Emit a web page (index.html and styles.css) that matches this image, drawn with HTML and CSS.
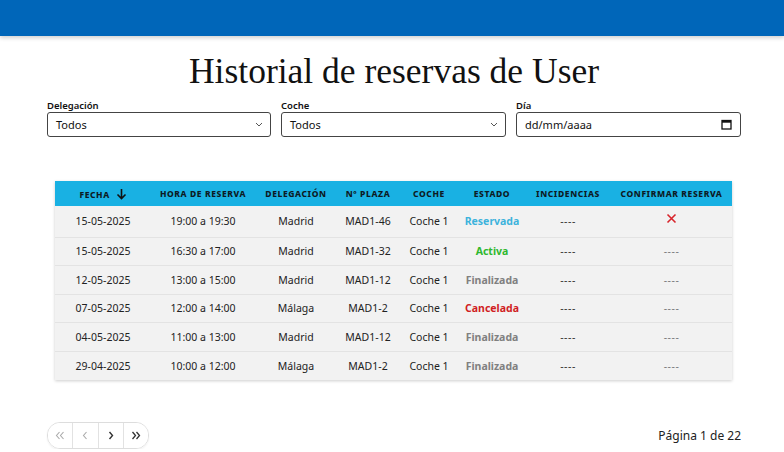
FILE: index.html
```html
<!DOCTYPE html>
<html lang="es">
<head>
<meta charset="utf-8">
<title>Historial de reservas</title>
<link rel="stylesheet" href="styles.css">
</head>
<body>
<header class="topbar"></header>
<main class="container">
  <h1 class="title">Historial de reservas de User</h1>
  <div class="filters">
    <div class="field">
      <label class="label">Delegación</label>
      <div class="control"><span>Todos</span>
        <svg class="chev" width="8" height="5" viewBox="0 0 8 5"><path d="M1 1l3 3 3-3" fill="none" stroke="#555" stroke-width="1"/></svg>
      </div>
    </div>
    <div class="field">
      <label class="label">Coche</label>
      <div class="control"><span>Todos</span>
        <svg class="chev" width="8" height="5" viewBox="0 0 8 5"><path d="M1 1l3 3 3-3" fill="none" stroke="#555" stroke-width="1"/></svg>
      </div>
    </div>
    <div class="field">
      <label class="label">Día</label>
      <div class="control"><span>dd/mm/aaaa</span>
        <svg class="cal" width="11" height="11" viewBox="0 0 11 11"><rect x="1" y="1.5" width="9" height="8.5" fill="none" stroke="#111" stroke-width="1.3"/><rect x="1" y="1.5" width="9" height="2.2" fill="#111"/></svg>
      </div>
    </div>
  </div>

  <div class="table-wrap">
    <table class="grid">
      <colgroup>
        <col class="c1"><col class="c2"><col class="c3"><col class="c4"><col class="c5"><col class="c6"><col class="c7"><col class="c8">
      </colgroup>
      <thead>
        <tr>
          <th>FECHA <svg class="arrow" width="11" height="12" viewBox="0 0 11 12"><path d="M5.5 1v9.5M1.5 6.5l4 4 4-4" fill="none" stroke="#111" stroke-width="1.6"/></svg></th>
          <th>HORA DE RESERVA</th>
          <th>DELEGACIÓN</th>
          <th>Nº PLAZA</th>
          <th>COCHE</th>
          <th>ESTADO</th>
          <th>INCIDENCIAS</th>
          <th>CONFIRMAR RESERVA</th>
        </tr>
      </thead>
      <tbody>
        <tr class="first">
          <td>15-05-2025</td><td>19:00 a 19:30</td><td>Madrid</td><td>MAD1-46</td><td>Coche 1</td>
          <td class="st reservada">Reservada</td><td class="dash">----</td>
          <td><svg class="x" width="11" height="11" viewBox="0 0 11 11"><path d="M1.5 1.5l8 8M9.5 1.5l-8 8" stroke="#d8242b" stroke-width="1.6"/></svg></td>
        </tr>
        <tr>
          <td>15-05-2025</td><td>16:30 a 17:00</td><td>Madrid</td><td>MAD1-32</td><td>Coche 1</td>
          <td class="st activa">Activa</td><td class="dash">----</td><td class="dash light">----</td>
        </tr>
        <tr>
          <td>12-05-2025</td><td>13:00 a 15:00</td><td>Madrid</td><td>MAD1-12</td><td>Coche 1</td>
          <td class="st finalizada">Finalizada</td><td class="dash">----</td><td class="dash light">----</td>
        </tr>
        <tr>
          <td>07-05-2025</td><td>12:00 a 14:00</td><td>Málaga</td><td>MAD1-2</td><td>Coche 1</td>
          <td class="st cancelada">Cancelada</td><td class="dash">----</td><td class="dash light">----</td>
        </tr>
        <tr>
          <td>04-05-2025</td><td>11:00 a 13:00</td><td>Madrid</td><td>MAD1-12</td><td>Coche 1</td>
          <td class="st finalizada">Finalizada</td><td class="dash">----</td><td class="dash light">----</td>
        </tr>
        <tr>
          <td>29-04-2025</td><td>10:00 a 12:00</td><td>Málaga</td><td>MAD1-2</td><td>Coche 1</td>
          <td class="st finalizada">Finalizada</td><td class="dash">----</td><td class="dash light">----</td>
        </tr>
      </tbody>
    </table>
  </div>

  <div class="footer">
    <div class="pager">
      <button class="pbtn off"><svg width="10" height="9" viewBox="0 0 10 9"><path d="M4.5 1L1.5 4.5 4.5 8M8.5 1L5.5 4.5 8.5 8" fill="none" stroke="#aaa" stroke-width="1.1"/></svg></button>
      <button class="pbtn off"><svg width="6" height="9" viewBox="0 0 6 9"><path d="M4.5 1L1.5 4.5 4.5 8" fill="none" stroke="#aaa" stroke-width="1.1"/></svg></button>
      <button class="pbtn"><svg width="6" height="9" viewBox="0 0 6 9"><path d="M1.5 1L4.5 4.5 1.5 8" fill="none" stroke="#333" stroke-width="1.4"/></svg></button>
      <button class="pbtn"><svg width="10" height="9" viewBox="0 0 10 9"><path d="M1.5 1L4.5 4.5 1.5 8M5.5 1L8.5 4.5 5.5 8" fill="none" stroke="#333" stroke-width="1.3"/></svg></button>
    </div>
    <div class="pageinfo">Página 1 de 22</div>
  </div>
</main>
</body>
</html>
```

FILE: styles.css
```css
* { box-sizing: border-box; }
html, body { margin: 0; padding: 0; background: #fff; }
body { font-family: "Noto Sans", "Open Sans", sans-serif; color: #222; }

.topbar {
  height: 36px;
  background: #0066b9;
  box-shadow: 0 2px 4px rgba(0, 0, 0, 0.18);
}

.container { margin: 0 43px 0 47px; }

.title {
  margin: 15px 0 0;
  font-family: "Liberation Serif", "DejaVu Serif", serif;
  font-weight: 400;
  font-size: 35.5px;
  line-height: 40px;
  text-align: center;
  color: #111;
}

.filters {
  display: grid;
  grid-template-columns: 224px 225px 225px;
  gap: 10px;
  margin-top: 9px;
}
.field { display: flex; flex-direction: column; }
.label {
  font-size: 9.5px;
  font-weight: 600;
  color: #111;
  line-height: 12px;
  margin-bottom: 0;
}
.control {
  height: 25px;
  border: 1px solid #444;
  border-radius: 3px;
  display: flex;
  align-items: center;
  justify-content: space-between;
  padding: 0 7px 0 8px;
  font-size: 11px;
  color: #111;
}
.cal { margin-right: 1px; }

.table-wrap {
  margin: 44px 9px 0 8px;
  box-shadow: 0 1px 3px rgba(0, 0, 0, 0.2);
}
.grid {
  width: 100%;
  border-collapse: collapse;
  table-layout: fixed;
}
.c1 { width: 96px; }
.c2 { width: 104px; }
.c3 { width: 82px; }
.c4 { width: 62px; }
.c5 { width: 60px; }
.c6 { width: 66px; }
.c7 { width: 86px; }
.c8 { width: 121px; }

.grid thead tr { background: #19b1e3; height: 25px; }
.grid th {
  font-size: 8.5px;
  font-weight: 800;
  letter-spacing: 0.6px;
  color: #0d1a24;
  text-align: center;
  padding: 0;
  white-space: nowrap;
}
.arrow { vertical-align: -2px; margin-left: 3px; }

.grid tbody tr {
  background: #f2f2f2;
  height: 28.5px;
  border-bottom: 1px solid #e3e3e3;
}
.grid tbody tr.first { height: 31px; }
.grid tbody tr:last-child { border-bottom: none; }
.grid td {
  text-align: center;
  font-size: 10.5px;
  color: #222;
  padding: 0;
  white-space: nowrap;
}
.grid td.st { font-weight: 700; }
.grid td.reservada { color: #3db3dc; }
.grid td.activa { color: #2eb82e; }
.grid td.finalizada { color: #808080; }
.grid td.cancelada { color: #d01e24; }
.grid td.dash { color: #333; letter-spacing: 0.5px; }
.grid td.dash.light { color: #7a7a7a; }
.x { vertical-align: 3px; }

.footer {
  display: flex;
  justify-content: space-between;
  align-items: center;
  margin-top: 42px;
}
.pager {
  display: flex;
  border: 1px solid #ddd;
  border-radius: 13px;
  height: 27px;
  overflow: hidden;
  width: 102px;
  box-shadow: 0 1px 2px rgba(0, 0, 0, 0.06);
}
.pbtn {
  flex: 1;
  border: none;
  border-right: 1px solid #e2e2e2;
  background: #fff;
  display: flex;
  align-items: center;
  justify-content: center;
  padding: 0;
}
.pbtn:last-child { border-right: none; }
.pageinfo {
  font-size: 12px;
  color: #222;
}
```
